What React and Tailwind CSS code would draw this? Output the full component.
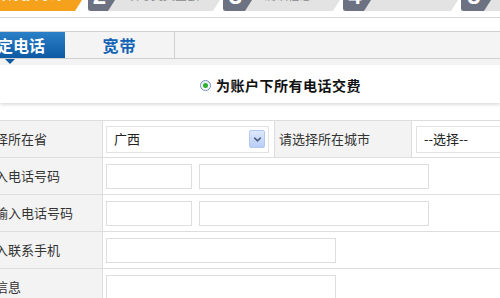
import { ChevronDown } from "lucide-react";

const font = { fontFamily: '"Noto Sans CJK SC", "Liberation Sans", sans-serif' };

function Step({ num, label, width, box, first }) {
  return (
    <div
      className={`relative h-[11px] bg-[#e3e3e3] [clip-path:polygon(0_0,100%_0,calc(100%_-_7px)_100%,0_100%)] flex ${first ? "" : "ml-[3px]"}`}
      style={{ width }}
    >
      <div
        className="h-[11px] bg-[#6d7282] rounded-bl-[3px] [clip-path:polygon(0_0,100%_0,calc(100%_-_7px)_100%,0_100%)] flex justify-center overflow-hidden shrink-0"
        style={{ width: box }}
      >
        <div className="-mt-[16px] text-[24px] leading-none font-bold text-white pr-[4px]" style={{ fontFamily: '"Liberation Sans", sans-serif' }}>
          {num}
        </div>
      </div>
      <div className="-mt-[11px] ml-[12px] text-[12px] leading-none text-[#8a8a8a] whitespace-nowrap">
        {label}
      </div>
    </div>
  );
}

function Label({ children }) {
  return (
    <div className="w-[103px] shrink-0 bg-[#f3f3f3] border-r border-[#dddddd] overflow-hidden flex items-center">
      <span className="-ml-[31px] whitespace-nowrap text-[13px] text-[#333333]">{children}</span>
    </div>
  );
}

function Input({ w }) {
  return <div className="h-[25px] bg-white border border-[#dedede]" style={{ width: w }} />;
}

function Select({ w, text, arrow }) {
  return (
    <div className="h-[27px] bg-white border border-[#e2e2e2] flex items-center justify-between pl-[7px] pr-[3px]" style={{ width: w }}>
      <span className="text-[13px] text-[#222222] whitespace-nowrap">{text}</span>
      {arrow && (
        <div className="w-[16px] h-[18px] rounded-[2px] border border-[#b4c8ee] bg-gradient-to-b from-[#dde8fc] to-[#b9cdf6] flex items-center justify-center">
          <ChevronDown size={11} strokeWidth={3.5} className="text-[#4d6185]" />
        </div>
      )}
    </div>
  );
}

export default function App() {
  return (
    <div className="w-[500px] h-[298px] overflow-hidden bg-white" style={font}>
      {/* step bar */}
      <div className="h-[11px] overflow-hidden flex">
        <div className="w-[82px] h-[11px] bg-[#f5a11c] rounded-br-[3px] [clip-path:polygon(0_0,100%_0,calc(100%_-_7px)_100%,0_100%)] shrink-0 overflow-hidden">
          <div className="-mt-[11px] ml-[2px] text-[12px] leading-none text-white whitespace-nowrap">择交费号码</div>
        </div>
        <div className="ml-[6px] flex">
          <Step first num="2" label="填写交费金额" width={132} box={27} />
          <Step num="3" label="确认信息" width={117} box={29} />
          <Step num="4" label="" width={115} box={28} />
          <Step num="5" label="" width={60} box={30} />
        </div>
      </div>

      <div className="mt-[6px] border-t border-[#dadada]" />

      {/* tabs */}
      <div className="mt-[13px] h-[28px] bg-[#f4f4f4] border-y border-[#d0d0d0] flex">
        <div className="relative w-[65px] bg-gradient-to-b from-[#2a80c8] to-[#0b5aa3] flex items-center justify-end pr-[20px]">
          <span className="text-[16px] font-bold text-white whitespace-nowrap">定电话</span>
          <div className="absolute left-[5px] -bottom-[6px] w-0 h-0 border-l-[5px] border-r-[5px] border-t-[5px] border-l-transparent border-r-transparent border-t-[#0b5aa3]" />
        </div>
        <div className="w-[110px] border-r border-[#d0d0d0] flex items-center justify-center">
          <span className="text-[16px] font-bold text-[#1262b5] tracking-[1px]">宽带</span>
        </div>
      </div>

      {/* radio panel */}
      <div className="bg-[#f3f3f3] pt-[6px]">
        <div className="h-[38px] bg-white shadow-[0_2px_3px_rgba(0,0,0,0.13)] flex items-center pl-[200px] pt-[3px] gap-[5px]">
          <div className="w-[11px] h-[11px] rounded-full border border-[#6f8fb5] bg-gradient-to-b from-[#e8eef6] to-white flex items-center justify-center">
            <div className="w-[5px] h-[5px] rounded-full bg-[#2fae2f]" />
          </div>
          <span className="text-[14px] font-bold text-[#111111] tracking-[0.5px]">为账户下所有电话交费</span>
        </div>
      </div>

      {/* form table */}
      <div className="mt-[17px] border-t border-[#dddddd]">
        <div className="h-[37px] border-b border-[#dddddd] flex">
          <Label>请选择所在省</Label>
          <div className="w-[172px] shrink-0 flex items-center pl-[3px] border-r border-[#dddddd]">
            <Select w={163} text="广西" arrow />
          </div>
          <div className="w-[137px] shrink-0 bg-[#f3f3f3] border-r border-[#dddddd] flex items-center pl-[4px]">
            <span className="text-[13px] text-[#333333] whitespace-nowrap">请选择所在城市</span>
          </div>
          <div className="flex-1 flex items-center pl-[4px]">
            <Select w={100} text="--选择--" />
          </div>
        </div>

        <div className="h-[37px] border-b border-[#dddddd] flex">
          <Label>请输入电话号码</Label>
          <div className="flex items-center gap-[7px] pl-[3px]">
            <Input w={86} />
            <Input w={230} />
          </div>
        </div>

        <div className="h-[37px] border-b border-[#dddddd] flex">
          <Label>再次输入电话号码</Label>
          <div className="flex items-center gap-[7px] pl-[3px]">
            <Input w={86} />
            <Input w={230} />
          </div>
        </div>

        <div className="h-[37px] border-b border-[#dddddd] flex">
          <Label>请输入联系手机</Label>
          <div className="flex items-center pl-[3px]">
            <Input w={230} />
          </div>
        </div>

        <div className="h-[37px] border-b border-[#dddddd] flex">
          <Label>备注信息</Label>
          <div className="flex items-center pl-[3px]">
            <Input w={230} />
          </div>
        </div>
      </div>
    </div>
  );
}
